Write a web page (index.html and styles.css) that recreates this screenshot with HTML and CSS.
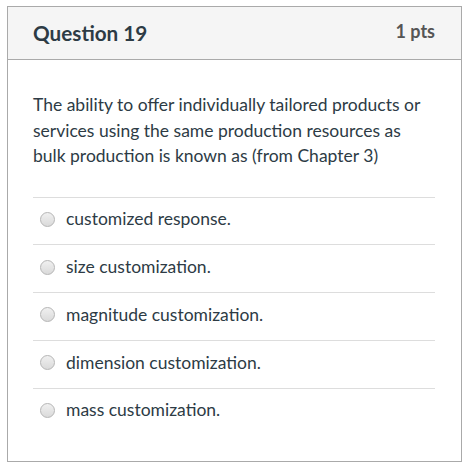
FILE: index.html
```html
<!DOCTYPE html>
<html>
<head>
<meta charset="utf-8">
<link rel="stylesheet" href="styles.css">
</head>
<body>
<div class="card">
  <div class="header">
    <span class="title">Question 19</span>
    <span class="pts">1 pts</span>
  </div>
  <div class="body">
    <p class="text">The ability to offer individually tailored products or services using the same production resources as bulk production is known as (from Chapter 3)</p>
    <div class="answers">
      <div class="answer"><span class="radio"></span><span class="label">customized response.</span></div>
      <div class="answer"><span class="radio"></span><span class="label">size customization.</span></div>
      <div class="answer"><span class="radio"></span><span class="label">magnitude customization.</span></div>
      <div class="answer"><span class="radio"></span><span class="label">dimension customization.</span></div>
      <div class="answer"><span class="radio"></span><span class="label">mass customization.</span></div>
    </div>
  </div>
</div>
</body>
</html>
```
FILE: styles.css
```css
html, body {
  margin: 0;
  padding: 0;
  background: #ffffff;
}
body {
  padding: 6px 7px;
  font-family: Lato, "Open Sans", sans-serif;
  color: #2d3b45;
}
.card {
  width: 453px;
  height: 454px;
  border: 1px solid #aaaaaa;
  box-sizing: content-box;
}
.header {
  height: 52px;
  background: #f5f5f5;
  border-bottom: 1px solid #aaaaaa;
  display: flex;
  align-items: center;
  justify-content: space-between;
  padding: 0 26px 0 25px;
}
.title {
  font-size: 20.7px;
  font-weight: 700;
  color: #2d3b45;
}
.pts {
  font-size: 18px;
  font-weight: 700;
  color: #555555;
  margin-top: -4px;
}
.body {
  padding: 32px 26px 0 25px;
}
.text {
  margin: 0;
  font-size: 17.5px;
  line-height: 25.5px;
}
.answers {
  margin-top: 28px;
}
.answer {
  height: 42.75px;
  box-sizing: content-box;
  border-top: 1px solid #dddddd;
  display: flex;
  align-items: center;
  padding-bottom: 4px;
}
.radio {
  width: 13px;
  height: 13px;
  border-radius: 50%;
  border: 1px solid #b5b5b5;
  background: linear-gradient(#f0f0f0, #dadada);
  margin-left: 7px;
  margin-right: 11px;
  flex: none;
  margin-top: 1px;
}
.label {
  font-size: 17.5px;
}
```
